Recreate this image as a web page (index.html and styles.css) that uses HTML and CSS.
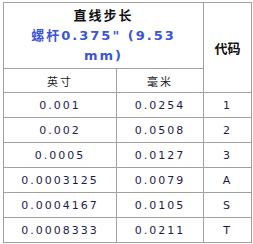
FILE: index.html
```html
<!DOCTYPE html>
<html lang="zh-CN">
<head>
    <meta charset="UTF-8">
    <title>直线步长</title>
    <link rel="stylesheet" href="styles.css">
</head>
<body>
    <table class="step-table">
        <colgroup>
            <col class="col-inch">
            <col class="col-mm">
            <col class="col-code">
        </colgroup>
        <tr class="row-title">
            <th colspan="2">
                <div class="title">直线步长</div>
                <div class="subtitle">螺杆0.375" (9.53 mm)</div>
            </th>
            <th rowspan="2" class="code-head">代码</th>
        </tr>
        <tr class="row-unit">
            <td>英寸</td>
            <td>毫米</td>
        </tr>
        <tr><td>0.001</td><td>0.0254</td><td>1</td></tr>
        <tr><td>0.002</td><td>0.0508</td><td>2</td></tr>
        <tr><td>0.0005</td><td>0.0127</td><td>3</td></tr>
        <tr><td>0.0003125</td><td>0.0079</td><td>A</td></tr>
        <tr><td>0.0004167</td><td>0.0105</td><td>S</td></tr>
        <tr><td>0.0008333</td><td>0.0211</td><td>T</td></tr>
    </table>
</body>
</html>
```

FILE: styles.css
```css
body {
    margin: 2px 0 0 3px;
    background-color: #fff;
    font-family: "DejaVu Sans", "Noto Sans CJK SC", sans-serif;
}
.step-table {
    border-collapse: collapse;
    table-layout: fixed;
    width: 249px;
}
.col-inch {
    width: 113px;
}
.col-mm {
    width: 87px;
}
.col-code {
    width: 48px;
}
.step-table th,
.step-table td {
    border: 1px solid #a0a0a0;
    padding: 0;
    text-align: center;
    vertical-align: middle;
}
.step-table td {
    height: 24px;
    font-size: 11px;
    letter-spacing: 2px;
    color: #1c1c4c;
}
.row-title th {
    height: 65px;
    padding: 0 6px;
}
.title {
    font-size: 13px;
    line-height: 20px;
    letter-spacing: 2px;
    color: #111;
}
.subtitle {
    font-size: 13px;
    line-height: 20px;
    letter-spacing: 2px;
    color: #3a55d8;
}
.code-head {
    font-size: 13px;
    color: #111;
}
.row-unit td {
    height: 23px;
    color: #222;
}
```
